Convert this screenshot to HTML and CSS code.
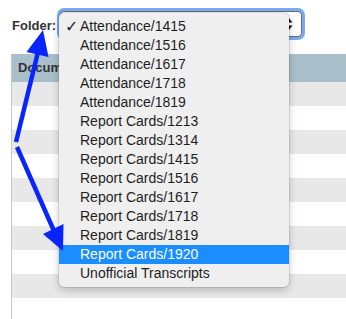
FILE: index.html
```html
<!DOCTYPE html>
<html>
<head>
<meta charset="utf-8">
<link rel="stylesheet" href="styles.css">
</head>
<body>
<div class="page">
  <div class="toolbar">
    <span class="label">Folder:</span>
    <div class="select">
      <svg class="sel-arrows" width="8" height="14" viewBox="0 0 8 14"><path d="M4 1 L7.5 5.5 L0.5 5.5 Z M4 13 L7.5 8.5 L0.5 8.5 Z" fill="#111"/></svg>
    </div>
  </div>
  <div class="table">
    <div class="thead">Document</div>
    <div class="row odd"></div>
    <div class="row"></div>
    <div class="row odd"></div>
    <div class="row"></div>
    <div class="row odd"></div>
    <div class="row"></div>
    <div class="row odd"></div>
    <div class="row"></div>
    <div class="row odd"></div>
    <div class="row last"></div>
  </div>

  <ul class="menu">
    <li class="item checked"><span class="check">✓</span>Attendance/1415</li>
    <li class="item">Attendance/1516</li>
    <li class="item">Attendance/1617</li>
    <li class="item">Attendance/1718</li>
    <li class="item">Attendance/1819</li>
    <li class="item">Report Cards/1213</li>
    <li class="item">Report Cards/1314</li>
    <li class="item">Report Cards/1415</li>
    <li class="item">Report Cards/1516</li>
    <li class="item">Report Cards/1617</li>
    <li class="item">Report Cards/1718</li>
    <li class="item">Report Cards/1819</li>
    <li class="item active">Report Cards/1920</li>
    <li class="item">Unofficial Transcripts</li>
  </ul>

  <svg class="arrows" width="346" height="319" viewBox="0 0 346 319">
    <g stroke="#0a24ff" stroke-width="4.5" stroke-linecap="butt" fill="none">
      <line x1="16" y1="142" x2="38" y2="52"/>
      <line x1="17" y1="147" x2="54" y2="231"/>
    </g>
    <g fill="#0a24ff">
      <polygon points="43,30 48.5,57 26.5,52"/>
      <polygon points="63,251 43,234 63.5,224"/>
    </g>
  </svg>
</div>
</body>
</html>
```
FILE: styles.css
```css
html, body {
  margin: 0;
  padding: 0;
  background: #ffffff;
  overflow: hidden;
}
.page {
  position: relative;
  width: 346px;
  height: 319px;
  overflow: hidden;
  font-family: "Liberation Sans", Arial, sans-serif;
}
.toolbar {
  display: flex;
  align-items: center;
  height: 26px;
  padding: 11px 0 0 12px;
  gap: 4px;
}
.label {
  font-size: 13px;
  font-weight: bold;
  color: #333333;
  margin-top: 2px;
}
.select {
  box-sizing: border-box;
  width: 242px;
  height: 26px;
  border: 1px solid #6b6b6b;
  border-radius: 4px;
  background: #ffffff;
  box-shadow: 0 0 0 3px #7aaaf3;
  display: flex;
  align-items: center;
  justify-content: flex-end;
  padding: 0 8px 0 20px;
}
.sel-arrows {
  display: block;
}
.table {
  margin: 17px 0 0 11px;
  border-left: 1px solid #c8c8c8;
  display: flex;
  flex-direction: column;
}
.thead {
  height: 28px;
  background: #a9bfca;
  font-size: 13px;
  font-weight: bold;
  color: #333;
  line-height: 28px;
  padding-left: 6px;
}
.row {
  height: 24px;
  background: #ffffff;
}
.row.odd {
  background: #e8e8e8;
}
.row.last {
  height: 21px;
}
.menu {
  position: absolute;
  left: 59px;
  top: 13px;
  width: 230px;
  margin: 0;
  padding: 4px 0;
  list-style: none;
  background: #efefef;
  border-radius: 5px;
  box-shadow: 0 0 0 0.5px rgba(0,0,0,0.18), 0 3px 9px rgba(0,0,0,0.22);
}
.item {
  position: relative;
  height: 19px;
  line-height: 19px;
  padding-left: 21px;
  font-size: 14px;
  color: #1e1e1e;
  white-space: nowrap;
}
.item.active {
  background: #1a8dff;
  color: #ffffff;
}
.check {
  position: absolute;
  left: 6px;
  top: 0;
  font-size: 16px;
  font-family: "DejaVu Sans", sans-serif;
}
.arrows {
  position: absolute;
  left: 0;
  top: 0;
  pointer-events: none;
}
```
